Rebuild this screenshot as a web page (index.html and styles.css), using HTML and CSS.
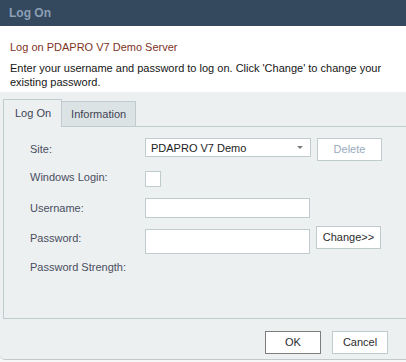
FILE: index.html
```html
<!DOCTYPE html>
<html lang="en">

<head>
    <meta charset="UTF-8">
    <title>Log On</title>
    <link rel="stylesheet" href="styles.css">
</head>

<body>
    <div class="dialog">
        <div class="titlebar">Log On</div>

        <div class="header">
            <div class="heading">Log on PDAPRO V7 Demo Server</div>
            <div class="intro">Enter your username and password to log on. Click 'Change' to change your existing password.</div>
        </div>

        <div class="content">
            <div class="tabs">
                <div class="tab active">Log On</div>
                <div class="tab">Information</div>
            </div>

            <div class="panel">
                <div class="row row-site">
                    <div class="label">Site:</div>
                    <div class="combo">
                        <span>PDAPRO V7 Demo</span>
                        <span class="arrow"></span>
                    </div>
                    <div class="button disabled">Delete</div>
                </div>
                <div class="row row-check">
                    <div class="label">Windows Login:</div>
                    <div class="checkbox"></div>
                </div>
                <div class="row row-user">
                    <div class="label">Username:</div>
                    <div class="textbox"></div>
                </div>
                <div class="row row-pass">
                    <div class="label">Password:</div>
                    <div class="textbox tall"></div>
                    <div class="button change">Change&gt;&gt;</div>
                </div>
                <div class="row row-strength">
                    <div class="label">Password Strength:</div>
                </div>
            </div>

            <div class="footer">
                <div class="button default">OK</div>
                <div class="button">Cancel</div>
            </div>
        </div>
    </div>
</body>

</html>
```

FILE: styles.css
```css
body {
    margin: 0;
    width: 406px;
    height: 362px;
    overflow: hidden;
    background: #f7f7f7;
    font-family: "Liberation Sans", Arial, sans-serif;
    font-size: 11px;
}

.dialog {
    display: flex;
    flex-direction: column;
    height: 359px;
    border-bottom: 1px solid #c3c9cb;
    border-bottom-left-radius: 5px;
    overflow: hidden;
    background: #ecf0f1;
}

.titlebar {
    height: 26px;
    line-height: 26px;
    padding-left: 9px;
    background: #34495e;
    color: #8c9fb6;
    font-size: 12px;
    font-weight: bold;
}

.header {
    height: 52px;
    padding: 14px 10px 0 10px;
    background: #ffffff;
}

.heading {
    line-height: 14px;
    color: #80341f;
}

.intro {
    margin-top: 7px;
    line-height: 14px;
    color: #161616;
}

.content {
    flex: 1;
    padding: 8px 0 0 3px;
}

.tabs {
    display: flex;
    align-items: flex-end;
    height: 26px;
}

.tab {
    height: 24px;
    line-height: 24px;
    padding: 0 9px;
    border: 1px solid #bfcbcd;
    border-bottom: none;
    background: #dce3e5;
    color: #3f4354;
    white-space: nowrap;
}

.tab.active {
    height: 27px;
    line-height: 26px;
    padding: 0 10px 0 11px;
    margin-right: -1px;
    margin-bottom: -1px;
    background: #ecf0f1;
    position: relative;
    z-index: 1;
}

.panel {
    width: 410px;
    height: 180px;
    border: 1px solid #bfcbcd;
    padding-top: 11px;
}

.row {
    display: flex;
    align-items: center;
    padding-left: 26px;
}

.label {
    width: 115px;
    color: #4a4e5e;
}

.row-site {
    height: 22px;
}

.row-check {
    height: 16px;
    margin-top: 11px;
}

.row-check .label {
    margin-top: -4px;
}

.row-user {
    height: 20px;
    margin-top: 11px;
}

.row-pass {
    height: 28px;
    margin-top: 8px;
    align-items: flex-start;
}

.row-pass .label {
    margin-top: 6px;
}

.row-strength {
    margin-top: 6px;
    height: 14px;
}

.combo {
    display: flex;
    align-items: center;
    justify-content: space-between;
    width: 159px;
    height: 17px;
    margin-top: -3px;
    padding-left: 5px;
    border: 1px solid #bfcbcd;
    background: #ffffff;
    color: #222222;
}

.arrow {
    width: 0;
    height: 0;
    margin-right: 7px;
    border-left: 3px solid transparent;
    border-right: 3px solid transparent;
    border-top: 3px solid #7b7b7b;
}

.checkbox {
    width: 14px;
    height: 14px;
    border: 1px solid #bfcbcd;
    background: #ffffff;
}

.textbox {
    width: 163px;
    height: 18px;
    border: 1px solid #bfcbcd;
    background: #ffffff;
}

.textbox.tall {
    height: 23px;
    margin-top: 3px;
}

.button {
    box-sizing: border-box;
    width: 56px;
    height: 23px;
    line-height: 21px;
    text-align: center;
    border: 1px solid #bfcbcd;
    background: #ffffff;
    color: #2b2b2b;
}

.button.disabled {
    width: 65px;
    margin-left: 6px;
    color: #9aaabe;
}

.button.change {
    width: 65px;
    margin-left: 6px;
}

.footer {
    display: flex;
    justify-content: flex-end;
    gap: 11px;
    padding: 12px 18px 0 0;
}

.button.default {
    border-color: #7d7d7d;
}
```
